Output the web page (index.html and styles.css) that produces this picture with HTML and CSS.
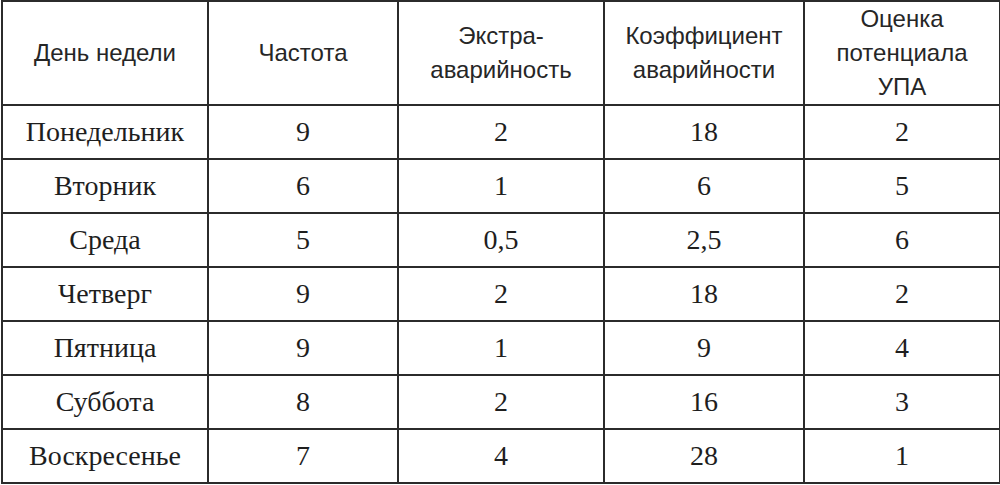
FILE: index.html
```html
<!DOCTYPE html>
<html lang="ru">
<head>
<meta charset="utf-8">
<link rel="stylesheet" href="styles.css">
</head>
<body>
<table class="grid">
  <colgroup>
    <col class="c1"><col class="c2"><col class="c3"><col class="c4"><col class="c5">
  </colgroup>
  <thead>
    <tr>
      <th>День недели</th>
      <th>Частота</th>
      <th>Экстра-<br>аварийность</th>
      <th>Коэффициент<br>аварийности</th>
      <th>Оценка<br>потенциала<br>УПА</th>
    </tr>
  </thead>
  <tbody>
    <tr><td>Понедельник</td><td>9</td><td>2</td><td>18</td><td>2</td></tr>
    <tr><td>Вторник</td><td>6</td><td>1</td><td>6</td><td>5</td></tr>
    <tr><td>Среда</td><td>5</td><td>0,5</td><td>2,5</td><td>6</td></tr>
    <tr><td>Четверг</td><td>9</td><td>2</td><td>18</td><td>2</td></tr>
    <tr><td>Пятница</td><td>9</td><td>1</td><td>9</td><td>4</td></tr>
    <tr><td>Суббота</td><td>8</td><td>2</td><td>16</td><td>3</td></tr>
    <tr><td>Воскресенье</td><td>7</td><td>4</td><td>28</td><td>1</td></tr>
  </tbody>
</table>
</body>
</html>
```
FILE: styles.css
```css
html, body {
  margin: 0;
  padding: 0;
  background: #ffffff;
}
.grid {
  margin: 0 0 0 1px;
  width: 998px;
  border-collapse: collapse;
  table-layout: fixed;
  color: #1e1e1e;
}
.c1 { width: 206px; }
.c2 { width: 190px; }
.c3 { width: 206px; }
.c4 { width: 200px; }
.c5 { width: 196px; }
.grid th, .grid td {
  border: 2px solid #2b2b2b;
  text-align: center;
  vertical-align: middle;
  padding: 0;
}
.grid th {
  font-family: "Liberation Sans", Arial, sans-serif;
  font-weight: normal;
  font-size: 24px;
  line-height: 34px;
  height: 102px;
  color: #262626;
}
.grid td {
  font-family: "Liberation Serif", "Times New Roman", serif;
  font-size: 28px;
  height: 52px;
  color: #1e1e1e;
}
```
